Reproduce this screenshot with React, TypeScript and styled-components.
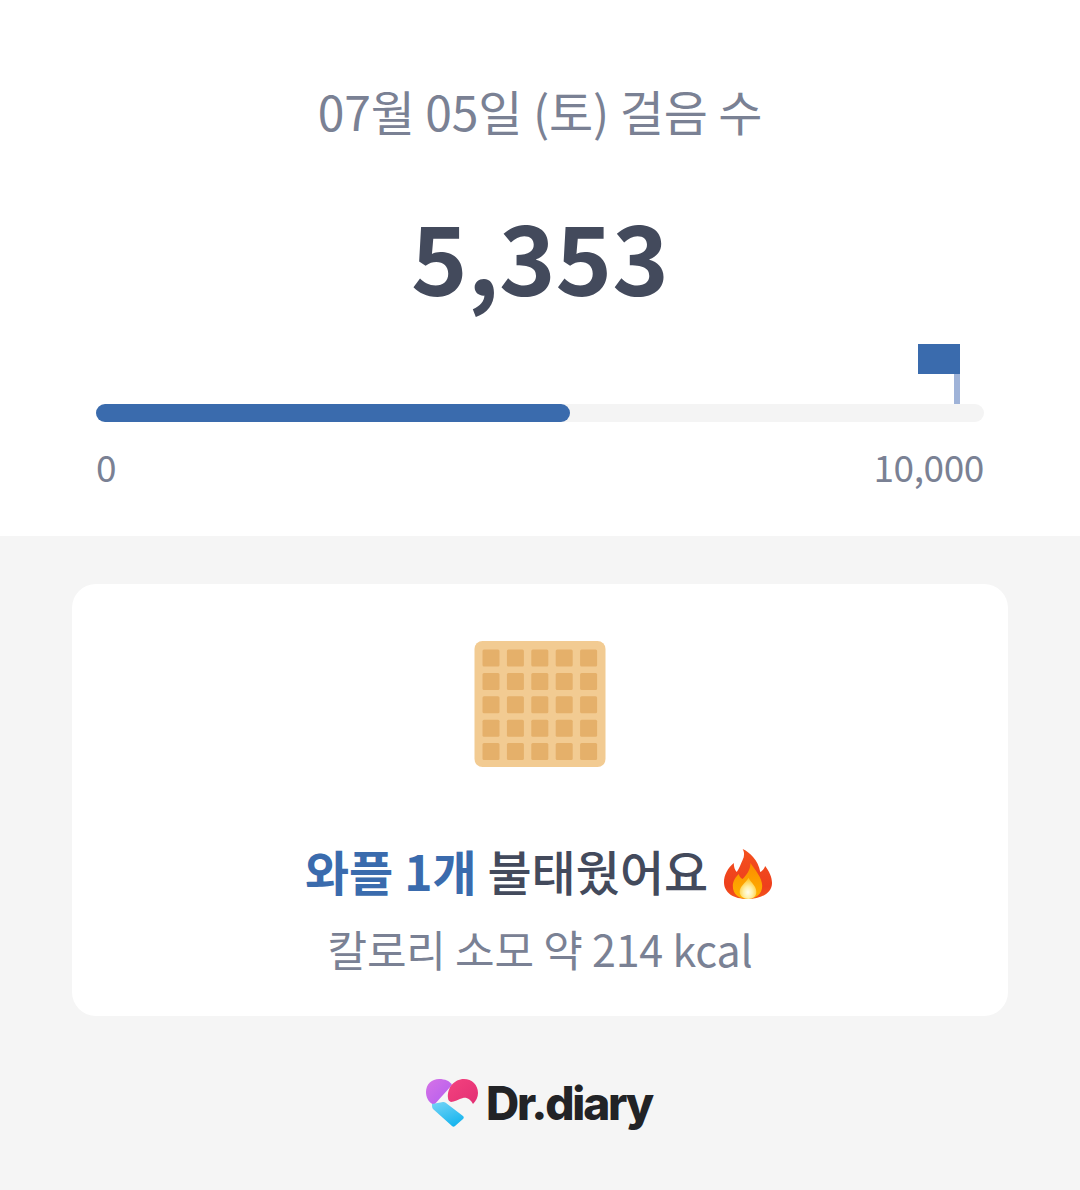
import { createGlobalStyle, styled } from 'styled-components';

const GOAL = 10000;
const STEPS = 5353;
const PROGRESS_PERCENT = 53.4;

const GlobalStyle = createGlobalStyle`
  html, body {
    margin: 0;
    padding: 0;
    background: #f5f5f5;
  }

  body {
    font-family: 'Noto Sans CJK KR', 'Noto Sans', sans-serif;
  }
`;

const waffleCells = Array.from({ length: 25 }, (_, i) => i);

const WaffleIcon = () => (
  <svg width="132" height="126" viewBox="0 0 132 126">
    <rect x="0.5" y="0" width="131" height="126" rx="8" fill="#f2cb92" />
    {waffleCells.map((i) => (
      <rect
        key={i}
        x={8.5 + (i % 5) * 24.4}
        y={8.5 + Math.floor(i / 5) * 23.4}
        width="17"
        height="17"
        rx="1.5"
        fill="#e5b06a"
      />
    ))}
  </svg>
);

const FlameIcon = () => (
  <FlameSvg width="50" height="52" viewBox="0 0 51 52" preserveAspectRatio="none">
    <defs>
      <linearGradient id="flameOuter" x1="0.5" y1="0" x2="0.5" y2="1">
        <stop offset="0" stopColor="#f4511e" />
        <stop offset="0.75" stopColor="#ee3f1c" />
        <stop offset="1" stopColor="#f4561c" />
      </linearGradient>
      <linearGradient id="flameMiddle" x1="0.5" y1="0" x2="0.5" y2="1">
        <stop offset="0" stopColor="#fb8c00" />
        <stop offset="1" stopColor="#ffb300" />
      </linearGradient>
      <radialGradient id="flameCore" cx="0.5" cy="0.68" r="0.6">
        <stop offset="0" stopColor="#fffef0" />
        <stop offset="0.45" stopColor="#fff0a8" />
        <stop offset="1" stopColor="#ffc933" />
      </radialGradient>
    </defs>
    <path
      d="M20 1C27 4 36 12 38 24C40 23 42 21 43 18C47 23 50 29 50 35C50 45 39 51 25 51C11 51 1 45 1 34C1 27 5 20 11 15C11 19 12 22 14 24C17 20 18 16 20 12C22 8 22 4 20 1Z"
      fill="url(#flameOuter)"
    />
    <path
      d="M28 15C33 22 40 30 40 38C40 46 33 51 25 51C16 51 10 46 10 38C10 33 13 29 16 26C17 29 18 30 20 31C24 27 28 22 28 15Z"
      fill="url(#flameMiddle)"
    />
    <path
      d="M26 30C23 35 17 38 17 44C17 48 21 51 26 51C31 51 34 48 34 44C34 38 29 35 26 30Z"
      fill="url(#flameCore)"
    />
  </FlameSvg>
);

const LogoMark = () => (
  <svg width="54" height="50" viewBox="0 0 54 50">
    <defs>
      <linearGradient id="logoPurple" x1="0" y1="0" x2="1" y2="1">
        <stop offset="0" stopColor="#d672e6" />
        <stop offset="1" stopColor="#b25df0" />
      </linearGradient>
      <linearGradient id="logoPink" x1="0" y1="0" x2="1" y2="1">
        <stop offset="0" stopColor="#f4427f" />
        <stop offset="1" stopColor="#e22f73" />
      </linearGradient>
      <linearGradient id="logoBlue" x1="0.2" y1="0" x2="0.7" y2="1">
        <stop offset="0" stopColor="#6fd2f6" />
        <stop offset="1" stopColor="#14b4ee" />
      </linearGradient>
    </defs>
    <path
      d="M27 7L9 27C3 24 1 19 1 14C1 6 7 1 14 1C20 1 25 3 27 7Z"
      fill="url(#logoPurple)"
    />
    <path
      d="M23 20C22 10 29 1 39 1C47 1 53 7 53 15C53 19 51 23 48 26C46 22 42 19 38 20C34 21 29 24 26 24C24 23 23 22 23 20Z"
      fill="url(#logoPink)"
    />
    <path
      d="M7 26L18 24C19 24 20 24 21 25L38 38C39 39 39 40 38 41L30 48C29 49 28 49 27 48L8 31C7 30 7 28 7 26Z"
      fill="url(#logoBlue)"
    />
  </svg>
);

const App = () => {
  return (
    <>
      <GlobalStyle />
      <Page>
        <StepsSection>
          <DateTitle>07월 05일 (토) 걸음 수</DateTitle>
          <StepCount>{STEPS.toLocaleString('en-US')}</StepCount>
          <GoalFlag>
            <FlagCloth />
            <FlagPole />
          </GoalFlag>
          <ProgressTrack>
            <ProgressFill style={{ width: `${PROGRESS_PERCENT}%` }} />
          </ProgressTrack>
          <ScaleRow>
            <span>0</span>
            <span>{GOAL.toLocaleString('en-US')}</span>
          </ScaleRow>
        </StepsSection>
        <BottomSection>
          <ResultCard>
            <WaffleIcon />
            <ResultTitle>
              <Highlight>와플 1개</Highlight> 불태웠어요 <FlameIcon />
            </ResultTitle>
            <ResultCaption>칼로리 소모 약 214 kcal</ResultCaption>
          </ResultCard>
          <Brand>
            <LogoMark />
            <BrandName>Dr.diary</BrandName>
          </Brand>
        </BottomSection>
      </Page>
    </>
  );
};

export default App;

const Page = styled.div`
  width: 1080px;
  height: 1190px;
  overflow: hidden;
`;

const StepsSection = styled.section`
  display: flex;
  flex-direction: column;
  box-sizing: border-box;
  height: 536px;
  padding: 77px 96px 0;
  background: #ffffff;
`;

const DateTitle = styled.h2`
  margin: 0;
  font-size: 48px;
  font-weight: 400;
  line-height: 66px;
  letter-spacing: -0.15px;
  text-align: center;
  color: #7a8194;
`;

const StepCount = styled.div`
  margin-top: 49px;
  font-size: 96px;
  font-weight: 700;
  line-height: 126px;
  text-align: center;
  color: #434a5c;
`;

const GoalFlag = styled.div`
  display: flex;
  flex-direction: column;
  align-items: flex-end;
  align-self: flex-end;
  width: 42px;
  margin-top: 26px;
  margin-right: 24px;
`;

const FlagCloth = styled.div`
  width: 42px;
  height: 30px;
  background: #3a6bad;
`;

const FlagPole = styled.div`
  width: 6px;
  height: 30px;
  background: #9fb3d8;
`;

const ProgressTrack = styled.div`
  height: 18px;
  border-radius: 9px;
  background: #f4f4f4;
`;

const ProgressFill = styled.div`
  height: 100%;
  border-radius: 9px;
  background: #3a6bad;
`;

const ScaleRow = styled.div`
  display: flex;
  justify-content: space-between;
  margin-top: 17px;
  font-size: 37px;
  font-weight: 400;
  line-height: 54px;
  letter-spacing: -0.4px;
  color: #7a8194;
`;

const BottomSection = styled.section`
  display: flex;
  flex-direction: column;
  align-items: center;
  padding: 48px 72px 0;
`;

const ResultCard = styled.div`
  display: flex;
  flex-direction: column;
  align-items: center;
  box-sizing: border-box;
  width: 936px;
  height: 432px;
  padding-top: 57px;
  border-radius: 24px;
  background: #ffffff;
`;

const ResultTitle = styled.div`
  height: 72px;
  margin-top: 67px;
  margin-right: 2px;
  font-size: 48px;
  font-weight: 500;
  line-height: 72px;
  white-space: nowrap;
  color: #434a5c;
`;

const Highlight = styled.span`
  font-weight: 700;
  color: #3a6bad;
`;

const FlameSvg = styled.svg`
  margin-left: 4px;
  vertical-align: -9px;
`;

const ResultCaption = styled.div`
  margin-top: 11px;
  font-size: 43px;
  font-weight: 400;
  line-height: 63px;
  letter-spacing: -0.2px;
  color: #7a8194;
`;

const Brand = styled.div`
  display: flex;
  align-items: center;
  gap: 7px;
  margin-top: 60px;
  margin-right: 3px;
`;

const BrandName = styled.div`
  font-family: 'Inter', 'Liberation Sans', sans-serif;
  font-size: 46px;
  font-weight: 800;
  line-height: 54px;
  letter-spacing: -2.2px;
  color: #222326;
`;
